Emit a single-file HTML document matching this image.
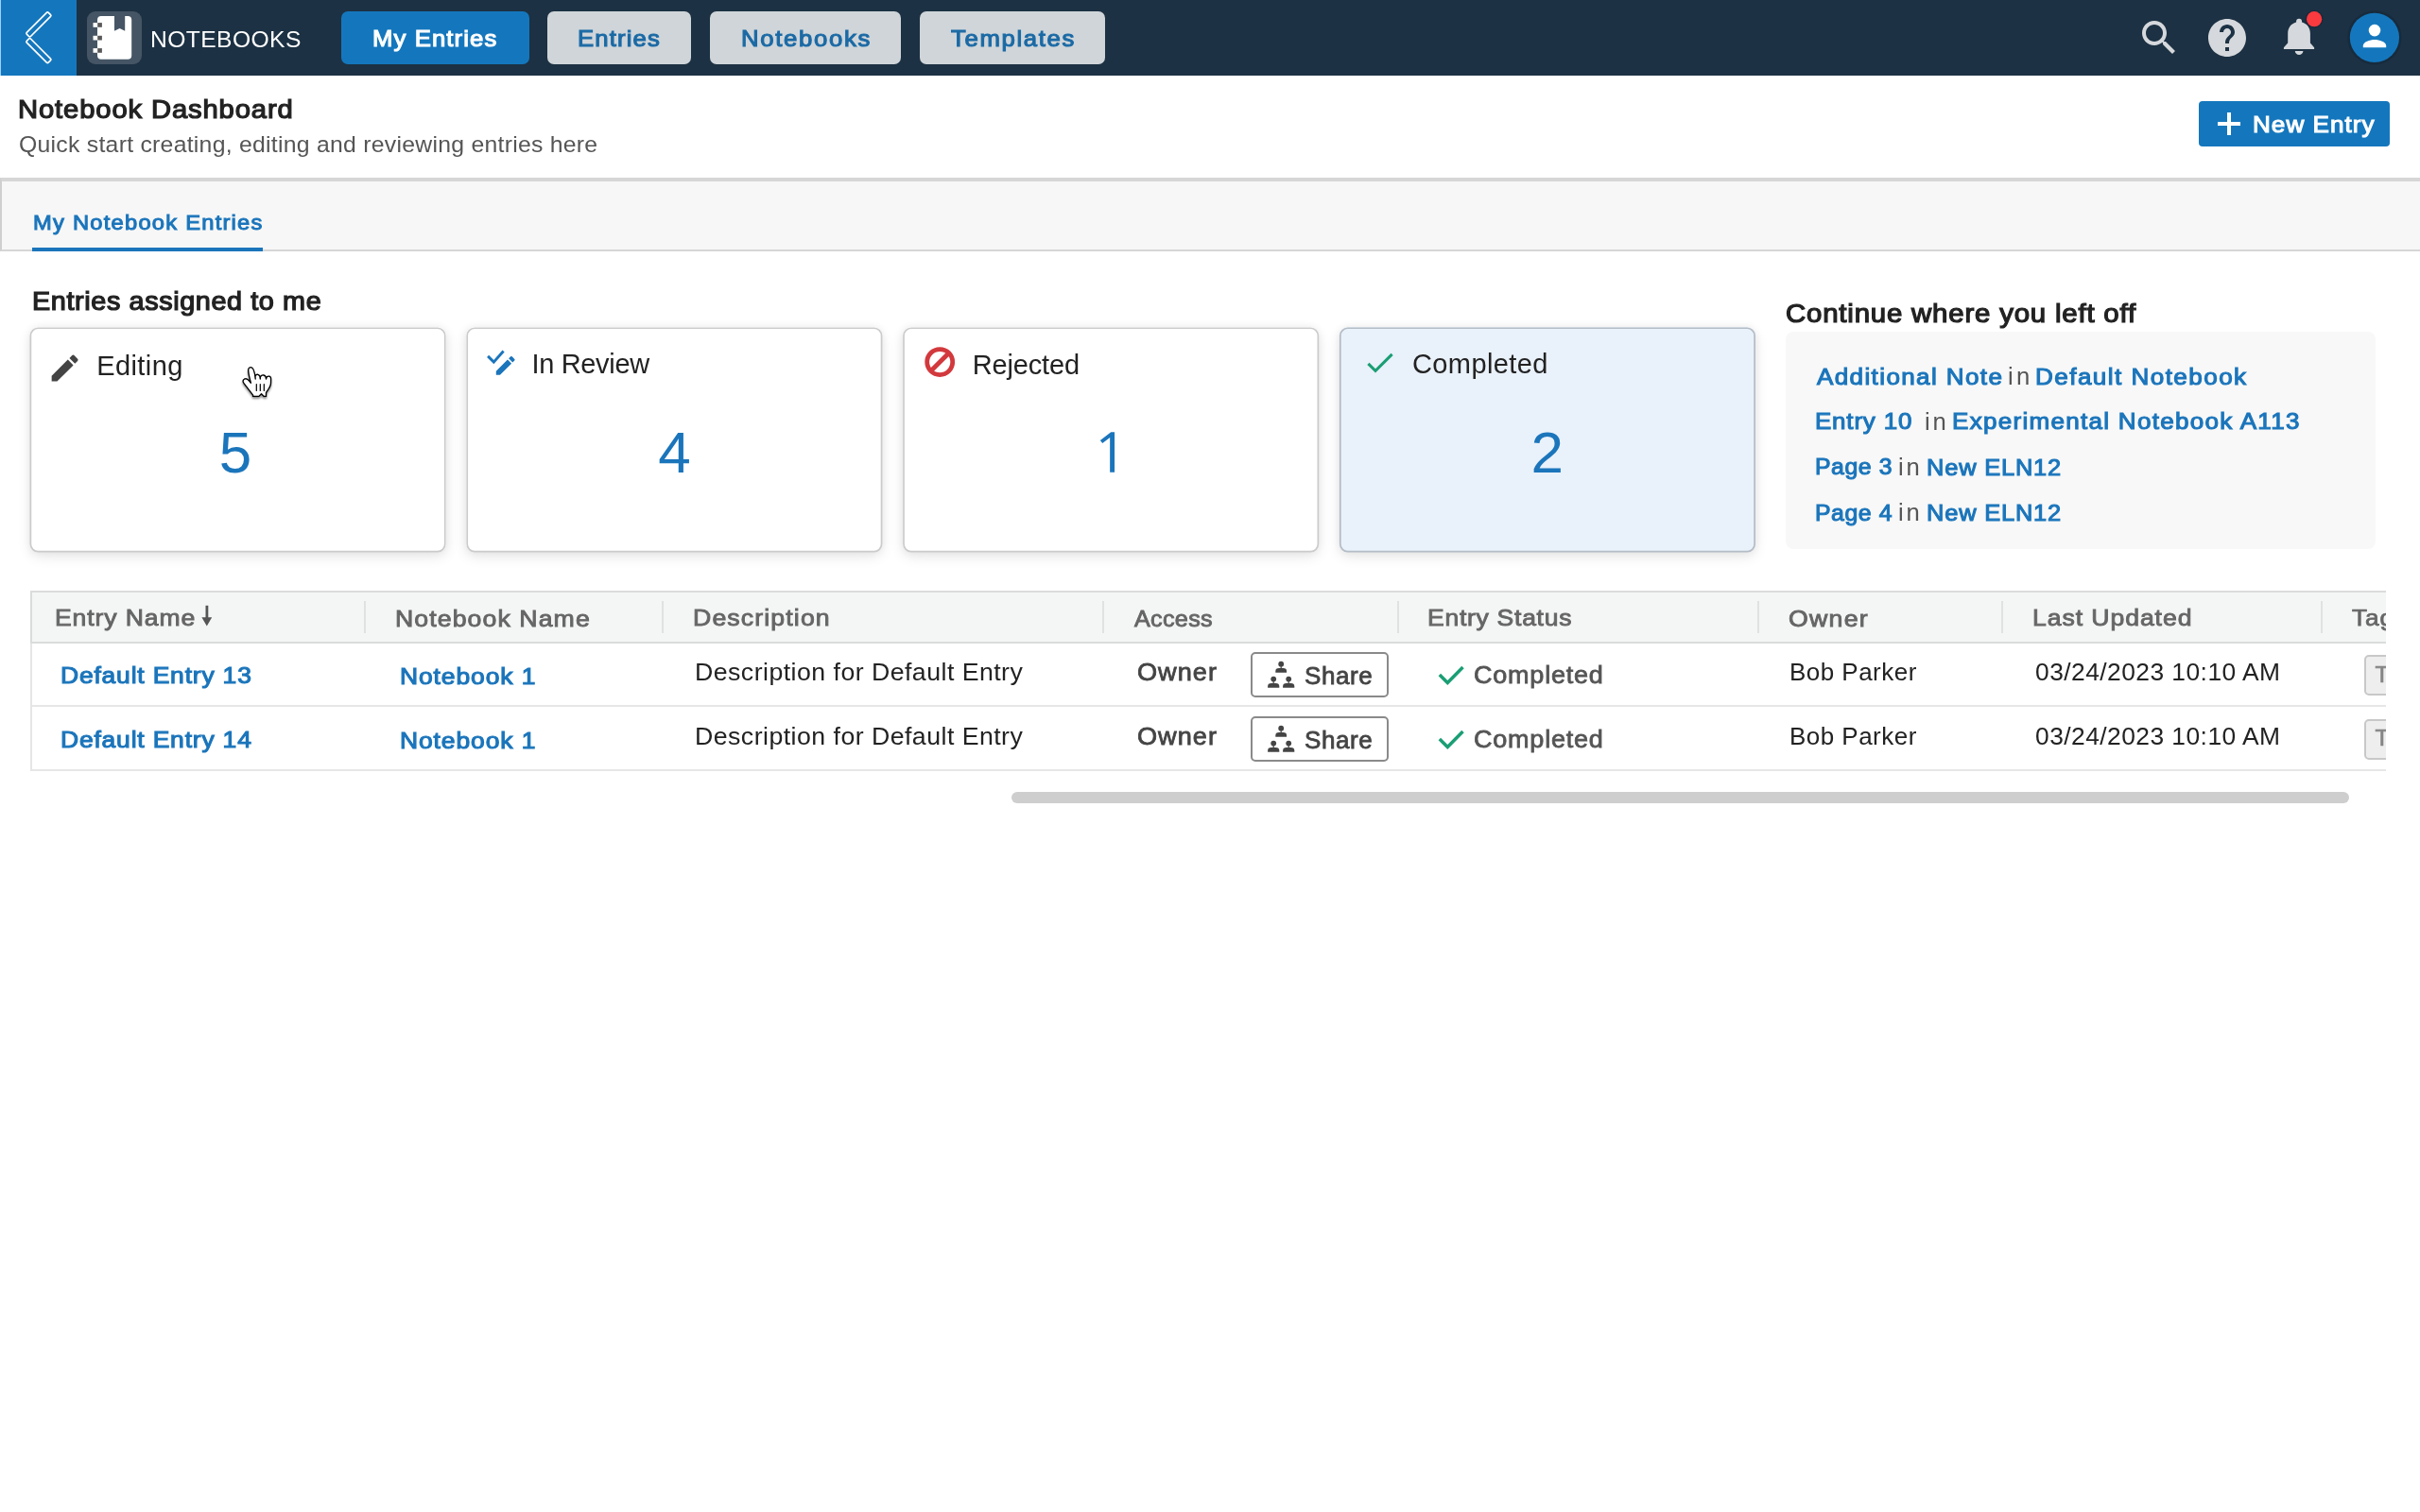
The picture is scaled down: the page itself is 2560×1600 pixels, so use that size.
<!DOCTYPE html>
<html><head><meta charset="utf-8"><title>Notebook Dashboard</title>
<style>
html,body{margin:0;padding:0;}
body{width:2560px;height:1600px;position:relative;overflow:hidden;background:#fff;font-family:"Liberation Sans",sans-serif;}
.a{position:absolute;box-sizing:border-box;}
.t{position:absolute;white-space:pre;font-weight:400;transform-origin:0 0;}
#txt{position:absolute;left:0;top:0;width:2560px;height:1600px;will-change:transform;}
svg{position:absolute;overflow:visible;}
.card{position:absolute;box-sizing:border-box;width:440px;height:238px;top:346px;border-radius:9px;background:#fff;box-shadow:0 5px 14px rgba(0,0,0,.10),0 0 8px rgba(0,0,0,.05);}
.num{position:absolute;top:0;left:0;width:100%;text-align:center;font-size:62px;line-height:62px;color:#1b75bb;}
.navb{position:absolute;box-sizing:border-box;top:12px;height:56px;border-radius:7px;background:#d0d5d9;}
.sep{position:absolute;width:2px;top:636px;height:34px;background:#dfe2e1;}
.share{position:absolute;box-sizing:border-box;left:1323px;width:146px;height:48px;border:2px solid #8a8a8a;border-radius:5px;background:#fff;}
.chip{position:absolute;box-sizing:border-box;left:21px;width:40px;height:43px;border:2px solid #c8c8c8;border-radius:5px;background:#eee;}

</style></head>
<body>
<!-- header -->
<div class="a" style="left:0;top:0;width:2560px;height:80px;background:#1c3143;"></div>
<div class="a" style="left:0;top:0;width:81px;height:80px;background:#1477bd;"></div>
<div class="a" style="left:0;top:0;width:1px;height:80px;background:#9fd0ff;"></div>
<svg style="left:0;top:0" width="81" height="80" viewBox="0 0 81 80" fill="none" stroke="#fff" stroke-width="1.7">
 <rect x="-16.200" y="-2.900" width="32.400" height="5.800" rx="1.300" transform="translate(40.900 25.900) rotate(-45)"/>
 <rect x="-16.200" y="-2.900" width="32.400" height="5.800" rx="1.300" transform="translate(40.900 53.600) rotate(45)"/>
</svg>
<!-- notebook icon -->
<div class="a" style="left:92px;top:12px;width:58px;height:56px;border-radius:9px;background:#455565;"></div>
<svg style="left:92px;top:12px" width="58" height="56" viewBox="92 12 58 56">
 <path fill="#fff" d="M107 17 H121 V32.7 L126.6 30 L132.2 32.7 V17 H135.2 a4 4 0 0 1 4 4 V58.7 a4 4 0 0 1 -4 4 H107 a4 4 0 0 1 -4 -4 V21 a4 4 0 0 1 4 -4 Z"/>
 <g fill="#fff"><rect x="98.5" y="24.1" width="4.7" height="4.7"/><rect x="98.5" y="37.8" width="4.7" height="4.7"/><rect x="98.5" y="51.1" width="4.7" height="4.7"/></g>
 <g fill="#585858"><rect x="103.2" y="24.1" width="4.7" height="4.7"/><rect x="103.2" y="37.8" width="4.7" height="4.7"/><rect x="103.2" y="51.1" width="4.7" height="4.7"/></g>
</svg>
<!-- nav buttons -->
<div class="navb" style="left:361px;width:199px;background:#1477bd;"></div>
<div class="navb" style="left:579px;width:152px;"></div>
<div class="navb" style="left:751px;width:202px;"></div>
<div class="navb" style="left:973px;width:196px;"></div>
<!-- right icons -->
<svg style="left:2260px;top:16px" width="48" height="48" viewBox="0 0 24 24" fill="#d5d8dc"><path d="M15.5 14h-.79l-.28-.27C15.41 12.59 16 11.11 16 9.5 16 5.91 13.09 3 9.5 3S3 5.91 3 9.5 5.91 16 9.5 16c1.61 0 3.09-.59 4.23-1.57l.27.28v.79l5 4.99L20.49 19l-4.99-5zm-6 0C7.01 14 5 11.99 5 9.5S7.01 5 9.5 5 14 7.01 14 9.5 11.99 14 9.5 14z"/></svg>
<svg style="left:2332px;top:16px" width="48" height="48" viewBox="0 0 24 24" fill="#d5d8dc"><path d="M12 2C6.48 2 2 6.48 2 12s4.48 10 10 10 10-4.48 10-10S17.52 2 12 2zm1 17h-2v-2h2v2zm2.07-7.75l-.9.92C13.45 12.9 13 13.5 13 15h-2v-.5c0-1.1.45-2.1 1.17-2.830l1.24-1.26c.37-.36.59-.86.59-1.41 0-1.1-.9-2-2-2s-2 .9-2 2H8c0-2.21 1.79-4 4-4s4 1.79 4 4c0 .88-.36 1.68-.93 2.25z"/></svg>
<svg style="left:2408px;top:10px" width="48" height="54" viewBox="2408 10 48 54" fill="#d5d8dc"><path d="M2432.070 19.800 a3 3 0 0 1 3 3 v0.700 C2440.500 25 2443.900 29.500 2443.900 35.500 V45.600 L2448.100 50.200 V52.100 H2415.900 V50.200 L2420.200 45.600 V35.500 C2420.200 29.500 2423.600 25 2429.070 23.500 V22.800 a3 3 0 0 1 3 -3 Z M2427.800 53.900 H2436.400 a4.300 4.200 0 0 1 -8.600 0 Z"/></svg>
<svg style="left:2436px;top:8px" width="24" height="24" viewBox="2436 8 24 24"><circle cx="2448.100" cy="20.200" r="9.300" fill="#17293a"/><circle cx="2448.100" cy="20.200" r="8.100" fill="#f93a3f"/></svg>
<svg style="left:2480px;top:8px" width="64" height="64" viewBox="2480 8 64 64"><circle cx="2511.900" cy="39.800" r="28.600" fill="#172b3d"/><circle cx="2511.900" cy="39.800" r="26.100" fill="#1477bd"/><circle cx="2512" cy="32.100" r="6.300" fill="#fff"/><path fill="#fff" d="M2499.800 50.200 v-1.600 C2499.800 44.300 2507 42 2512 42 S2524.200 44.300 2524.200 48.600 v1.600 Z"/></svg>
<!-- New entry button -->
<div class="a" style="left:2326px;top:107px;width:202px;height:48px;border-radius:4px;background:#1477bd;"></div>
<div class="a" style="left:2346px;top:129px;width:24px;height:4.4px;background:#fff;"></div>
<div class="a" style="left:2355.8px;top:119px;width:4.4px;height:24px;background:#fff;"></div>
<!-- tab bar -->
<div class="a" style="left:0;top:188px;width:2560px;height:78px;background:#f7f7f7;border-top:4px solid #d6d6d6;border-bottom:2px solid #d6d6d6;border-left:2px solid #cfcfcf;"></div>
<div class="a" style="left:34px;top:262px;width:244px;height:4px;background:#1b75bb;"></div>
<!-- cards -->
<div class="card" style="left:31.6px;background:#fff;"></div>
<svg style="left:0;top:0" width="2560" height="620"><rect x="32.40" y="347.25" width="438.35" height="236.45" rx="8" fill="#fff" stroke="#cbcbcb" stroke-width="1.7"/></svg>
<div class="card" style="left:493.4px;background:#fff;"></div>
<svg style="left:0;top:0" width="2560" height="620"><rect x="494.20" y="347.25" width="438.35" height="236.45" rx="8" fill="#fff" stroke="#cbcbcb" stroke-width="1.7"/></svg>
<div class="card" style="left:955.2px;background:#fff;"></div>
<svg style="left:0;top:0" width="2560" height="620"><rect x="956.00" y="347.25" width="438.35" height="236.45" rx="8" fill="#fff" stroke="#cbcbcb" stroke-width="1.7"/></svg>
<svg style="left:1150px;top:450px" width="40" height="56" viewBox="1150 450 40 56"><path fill="#1b75bb" d="M1175.250 457.250 H1179.050 V499.800 H1174.150 V463.060 L1166.230 469.080 L1163.860 466.070 Z"/></svg>
<div class="card" style="left:1417.0px;background:#e9f1fa;"></div>
<svg style="left:0;top:0" width="2560" height="620"><rect x="1417.80" y="347.25" width="438.35" height="236.45" rx="8" fill="#e9f1fa" stroke="#b4bcc5" stroke-width="1.7"/></svg>
<!-- card icons -->
<svg style="left:50.200px;top:371.100px" width="37.200" height="37.200" viewBox="0 0 24 24" fill="#444"><path d="M3 17.250V21h3.750L17.810 9.940l-3.750-3.750L3 17.250zM20.710 7.040a.996.996 0 0 0 0-1.410l-2.340-2.340a.996.996 0 0 0-1.410 0l-1.830 1.830 3.750 3.750 1.830-1.830z"/></svg>
<svg style="left:500px;top:355px" width="60" height="60" viewBox="500 355 60 60">
 <path d="M516.100 376.900 L522.300 383.100 L532.600 371.500" fill="none" stroke="#1b75bb" stroke-width="2.900"/>
 <g transform="translate(521.500 373.700) scale(1.100)" fill="#1b75bb"><path d="M3 17.250V21h3.750L17.810 9.940l-3.750-3.750L3 17.250zM20.710 7.040a.996.996 0 0 0 0-1.410l-2.340-2.340a.996.996 0 0 0-1.410 0l-1.830 1.830 3.750 3.750 1.830-1.830z"/></g>
</svg>
<svg style="left:976px;top:365px" width="36" height="36" viewBox="976 365 36 36" fill="none" stroke="#d2393d" stroke-width="4.800">
 <circle cx="994.200" cy="383.100" r="13.500"/><path d="M984.800 392.500 L1003.600 373.700"/>
</svg>
<svg style="left:1441.200px;top:365.300px" width="37.400" height="37.400" viewBox="0 0 24 24" fill="#1a9e74"><path d="M9 16.170L4.830 12l-1.420 1.410L9 19 21 7l-1.410-1.410z"/></svg>
<!-- continue panel -->
<div class="a" style="left:1889px;top:351px;width:624px;height:230px;border-radius:8px;background:#f8f8f8;"></div>
<!-- table -->
<div class="a" style="left:32px;top:625px;width:2492px;height:56px;background:#f4f6f5;border:2px solid #d9dcdb;border-right:none;"></div>
<div class="a" style="left:32px;top:681px;width:2492px;height:135px;border-left:2px solid #e6e6e6;border-bottom:2px solid #e6e6e6;"></div>
<div class="a" style="left:34px;top:746px;width:2490px;height:2px;background:#e6e6e6;"></div>
<div class="sep" style="left:385px"></div><div class="sep" style="left:700px"></div><div class="sep" style="left:1166px"></div><div class="sep" style="left:1478px"></div><div class="sep" style="left:1859px"></div><div class="sep" style="left:2117px"></div><div class="sep" style="left:2455px"></div>
<svg style="left:210px;top:636px" width="20" height="30" viewBox="210 636 20 30" fill="#555"><rect x="217.500" y="640.800" width="2.800" height="14"/><path d="M213.400 653.200 H224.200 L218.800 662.400 Z"/></svg>
<div class="share" style="top:690px"></div>
<div class="share" style="top:758px"></div>
<!-- scrollbar -->
<div class="a" style="left:1070px;top:838px;width:1415px;height:12px;border-radius:6px;background:#cecece;"></div>
<svg style="left:240px;top:375px" width="70" height="60" viewBox="0 0 70 60">
 <defs><filter id="cs" x="-30%" y="-30%" width="160%" height="170%"><feGaussianBlur in="SourceAlpha" stdDeviation="1"/><feOffset dy="1.5"/><feComponentTransfer><feFuncA type="linear" slope="0.450"/></feComponentTransfer><feMerge><feMergeNode/><feMergeNode in="SourceGraphic"/></feMerge></filter></defs>
 <g filter="url(#cs)">
 <path fill="#fff" stroke="#000" stroke-width="1.350" stroke-linejoin="round" d="M25.2 13.6 C23.3 13.6 22.5 15.4 22.7 17.6 C23 21.5 24.3 26.3 25.4 30.2 L23.6 28 C22.3 26.4 20.2 25.2 18.4 26.2 C16.7 27.3 16.7 29 17.8 30.4 L27.6 43.2 V44.4 H33.9 L36.5 41.7 L39.2 44.4 H41.5 V40.6 C44 36.8 46.4 34 46.5 30.5 L46.6 25.8 C46.6 22.6 42.6 22.2 41.8 25 L41.5 26 C41.6 21.4 36.2 20.6 35.4 24.2 L35.3 26 C35.4 20.6 30.6 20 30 23.4 L30.200 26 C29.800 21.5 28.800 13.700 25.200 13.600 Z"/>
 <path stroke="#000" stroke-width="1.2" stroke-linecap="round" d="M31.3 31.500 V38.400 M35.300 31.500 V38.400 M39.300 31.500 V38.400"/>
 </g>
</svg><svg style="left:1515px;top:696px" width="40" height="34" viewBox="1515 696 40 34" fill="none" stroke="#1a9e74" stroke-width="3.500"><path d="M1522.850 714.050 L1531.300 722.500 L1547.500 706"/></svg><svg style="left:1515px;top:764px" width="40" height="34" viewBox="1515 696 40 34" fill="none" stroke="#1a9e74" stroke-width="3.500"><path d="M1522.850 714.050 L1531.300 722.500 L1547.500 706"/></svg><svg style="left:1338px;top:696px" width="34" height="34" viewBox="1338 696 34 34" fill="#444">
 <circle cx="1355.200" cy="702.700" r="2.900"/><rect x="1354.600" y="705" width="1.200" height="3"/><path d="M1349.300 711.800 v-1.400 a3.800 3.300 0 0 1 3.800 -3.300 h4.200 a3.800 3.300 0 0 1 3.800 3.300 v1.400 Z"/>
 <circle cx="1347.200" cy="718.600" r="2.900"/><rect x="1346.600" y="721" width="1.200" height="3"/><path d="M1341.100 727.800 v-1.400 a3.800 3.300 0 0 1 3.800 -3.300 h4.600 a3.800 3.300 0 0 1 3.800 3.300 v1.400 Z"/>
 <circle cx="1363.200" cy="718.600" r="2.900"/><rect x="1362.600" y="721" width="1.200" height="3"/><path d="M1357.100 727.800 v-1.400 a3.800 3.300 0 0 1 3.800 -3.300 h4.600 a3.800 3.300 0 0 1 3.800 3.300 v1.400 Z"/>
</svg><svg style="left:1338px;top:764px" width="34" height="34" viewBox="1338 696 34 34" fill="#444">
 <circle cx="1355.200" cy="702.700" r="2.900"/><rect x="1354.600" y="705" width="1.200" height="3"/><path d="M1349.300 711.800 v-1.400 a3.800 3.300 0 0 1 3.800 -3.300 h4.200 a3.800 3.300 0 0 1 3.800 3.300 v1.400 Z"/>
 <circle cx="1347.200" cy="718.600" r="2.900"/><rect x="1346.600" y="721" width="1.200" height="3"/><path d="M1341.100 727.800 v-1.400 a3.800 3.300 0 0 1 3.800 -3.300 h4.600 a3.800 3.300 0 0 1 3.800 3.300 v1.400 Z"/>
 <circle cx="1363.200" cy="718.600" r="2.900"/><rect x="1362.600" y="721" width="1.200" height="3"/><path d="M1357.100 727.800 v-1.400 a3.800 3.300 0 0 1 3.800 -3.300 h4.600 a3.800 3.300 0 0 1 3.800 3.300 v1.400 Z"/>
</svg>
<div id="txt">
<div class="num" style="left:29.8px;width:438.35px;top:447.5px;">5</div>
<div class="num" style="left:494.4px;width:438.35px;top:447.5px;">4</div>
<div class="num" style="left:1417.6px;width:438.35px;top:447.5px;">2</div>
<span class="t" style="left:159.10px;top:29.90px;font-size:24.45px;line-height:24.45px;letter-spacing:0.407px;color:#fff;transform:scaleX(1.008);">NOTEBOOKS</span>
<span class="t" style="left:394.16px;top:29.21px;font-size:23.81px;line-height:23.81px;letter-spacing:1.020px;color:#fff;-webkit-text-stroke:1.07px #fff;transform:scaleX(1.08);">My Entries</span>
<span class="t" style="left:611.30px;top:29.21px;font-size:23.81px;line-height:23.81px;letter-spacing:1.066px;color:#1b6aa5;-webkit-text-stroke:1.07px #1b6aa5;transform:scaleX(1.08);">Entries</span>
<span class="t" style="left:784.34px;top:29.21px;font-size:23.81px;line-height:23.81px;letter-spacing:1.554px;color:#1b6aa5;-webkit-text-stroke:1.07px #1b6aa5;transform:scaleX(1.08);">Notebooks</span>
<span class="t" style="left:1005.64px;top:29.21px;font-size:23.81px;line-height:23.81px;letter-spacing:1.516px;color:#1b6aa5;-webkit-text-stroke:1.07px #1b6aa5;transform:scaleX(1.08);">Templates</span>
<span class="t" style="left:19.39px;top:101.85px;font-size:27.22px;line-height:27.22px;letter-spacing:0.822px;color:#222;-webkit-text-stroke:1.22px #222;transform:scaleX(1.072);">Notebook Dashboard</span>
<span class="t" style="left:19.60px;top:140.65px;font-size:24.04px;line-height:24.04px;letter-spacing:0.255px;color:#555;transform:scaleX(1.031);">Quick start creating, editing and reviewing entries here</span>
<span class="t" style="left:2383.33px;top:119.85px;font-size:24.11px;line-height:24.11px;letter-spacing:0.976px;color:#fff;-webkit-text-stroke:1.08px #fff;transform:scaleX(1.08);">New Entry</span>
<span class="t" style="left:35.40px;top:224.71px;font-size:21.97px;line-height:21.97px;letter-spacing:1.141px;color:#1b75bb;-webkit-text-stroke:0.99px #1b75bb;transform:scaleX(1.08);">My Notebook Entries</span>
<span class="t" style="left:34.26px;top:304.95px;font-size:27.22px;line-height:27.22px;letter-spacing:0.576px;color:#222;-webkit-text-stroke:1.22px #222;transform:scaleX(1.058);">Entries assigned to me</span>
<span class="t" style="left:102.28px;top:372.74px;font-size:29.01px;line-height:29.01px;letter-spacing:0.392px;color:#222;">Editing</span>
<span class="t" style="left:562.40px;top:370.69px;font-size:29.01px;line-height:29.01px;letter-spacing:-0.316px;color:#222;">In Review</span>
<span class="t" style="left:1028.77px;top:371.64px;font-size:29.01px;line-height:29.01px;letter-spacing:-0.159px;color:#222;">Rejected</span>
<span class="t" style="left:1493.55px;top:370.94px;font-size:29.01px;line-height:29.01px;letter-spacing:0.375px;color:#222;transform:scaleX(1.001);">Completed</span>
<span class="t" style="left:1889.05px;top:318.35px;font-size:27.22px;line-height:27.22px;letter-spacing:0.745px;color:#222;-webkit-text-stroke:1.22px #222;transform:scaleX(1.08);">Continue where you left off</span>
<span class="t" style="left:1922.09px;top:386.95px;font-size:24.11px;line-height:24.11px;letter-spacing:1.275px;color:#1b75bb;-webkit-text-stroke:1.08px #1b75bb;transform:scaleX(1.08);">Additional Note</span>
<span class="t" style="left:2124.24px;top:386.00px;font-size:25.28px;line-height:25.28px;letter-spacing:3.332px;color:#555;transform:scaleX(1.019);">in</span>
<span class="t" style="left:2153.10px;top:386.95px;font-size:24.11px;line-height:24.11px;letter-spacing:1.354px;color:#1b75bb;-webkit-text-stroke:1.08px #1b75bb;transform:scaleX(1.08);">Default Notebook</span>
<span class="t" style="left:1920.28px;top:434.45px;font-size:24.11px;line-height:24.11px;letter-spacing:0.772px;color:#1b75bb;-webkit-text-stroke:1.08px #1b75bb;transform:scaleX(1.075);">Entry 10</span>
<span class="t" style="left:2036.08px;top:434.00px;font-size:25.28px;line-height:25.28px;letter-spacing:2.696px;color:#555;transform:scaleX(1.016);">in</span>
<span class="t" style="left:2065.09px;top:434.45px;font-size:24.11px;line-height:24.11px;letter-spacing:1.187px;color:#1b75bb;-webkit-text-stroke:1.08px #1b75bb;transform:scaleX(1.08);">Experimental Notebook A113</span>
<span class="t" style="left:1920.32px;top:482.45px;font-size:24.11px;line-height:24.11px;letter-spacing:0.545px;color:#1b75bb;-webkit-text-stroke:1.08px #1b75bb;transform:scaleX(1.029);">Page 3</span>
<span class="t" style="left:2007.91px;top:482.00px;font-size:25.28px;line-height:25.28px;letter-spacing:2.696px;color:#555;transform:scaleX(1.016);">in</span>
<span class="t" style="left:2037.79px;top:482.95px;font-size:24.11px;line-height:24.11px;letter-spacing:0.781px;color:#1b75bb;-webkit-text-stroke:1.08px #1b75bb;transform:scaleX(1.054);">New ELN12</span>
<span class="t" style="left:1920.32px;top:530.55px;font-size:24.11px;line-height:24.11px;letter-spacing:0.545px;color:#1b75bb;-webkit-text-stroke:1.08px #1b75bb;transform:scaleX(1.029);">Page 4</span>
<span class="t" style="left:2007.91px;top:530.10px;font-size:25.28px;line-height:25.28px;letter-spacing:2.696px;color:#555;transform:scaleX(1.016);">in</span>
<span class="t" style="left:2037.79px;top:530.55px;font-size:24.11px;line-height:24.11px;letter-spacing:0.781px;color:#1b75bb;-webkit-text-stroke:1.08px #1b75bb;transform:scaleX(1.054);">New ELN12</span>
<span class="t" style="left:58.04px;top:641.94px;font-size:24.7px;line-height:24.7px;letter-spacing:0.837px;color:#666;-webkit-text-stroke:0.91px #666;transform:scaleX(1.075);">Entry Name</span>
<span class="t" style="left:418.40px;top:642.94px;font-size:24.7px;line-height:24.7px;letter-spacing:1.009px;color:#666;-webkit-text-stroke:0.91px #666;transform:scaleX(1.08);">Notebook Name</span>
<span class="t" style="left:733.23px;top:641.94px;font-size:24.7px;line-height:24.7px;letter-spacing:1.047px;color:#666;-webkit-text-stroke:0.91px #666;transform:scaleX(1.08);">Description</span>
<span class="t" style="left:1199.78px;top:642.94px;font-size:24.7px;line-height:24.7px;letter-spacing:0.310px;color:#666;-webkit-text-stroke:0.91px #666;transform:scaleX(1.018);">Access</span>
<span class="t" style="left:1509.73px;top:641.94px;font-size:24.7px;line-height:24.7px;letter-spacing:0.689px;color:#666;-webkit-text-stroke:0.91px #666;transform:scaleX(1.073);">Entry Status</span>
<span class="t" style="left:1892.42px;top:642.94px;font-size:24.7px;line-height:24.7px;letter-spacing:1.199px;color:#666;-webkit-text-stroke:0.91px #666;transform:scaleX(1.08);">Owner</span>
<span class="t" style="left:2150.40px;top:641.94px;font-size:24.7px;line-height:24.7px;letter-spacing:0.856px;color:#666;-webkit-text-stroke:0.91px #666;transform:scaleX(1.078);">Last Updated</span>
<span class="t" style="left:63.91px;top:703.22px;font-size:24.49px;line-height:24.49px;letter-spacing:0.755px;color:#1b75bb;-webkit-text-stroke:1.1px #1b75bb;transform:scaleX(1.08);">Default Entry 13</span>
<span class="t" style="left:423.33px;top:703.72px;font-size:24.49px;line-height:24.49px;letter-spacing:0.833px;color:#1b75bb;-webkit-text-stroke:1.1px #1b75bb;transform:scaleX(1.08);">Notebook 1</span>
<span class="t" style="left:735.03px;top:698.62px;font-size:25.49px;line-height:25.49px;letter-spacing:0.437px;color:#222;transform:scaleX(1.048);">Description for Default Entry</span>
<span class="t" style="left:1203.10px;top:698.53px;font-size:25.74px;line-height:25.74px;letter-spacing:0.950px;color:#444;-webkit-text-stroke:0.77px #444;transform:scaleX(1.055);">Owner</span>
<span class="t" style="left:1380.10px;top:702.83px;font-size:25.74px;line-height:25.74px;letter-spacing:0.577px;color:#444;-webkit-text-stroke:0.77px #444;transform:scaleX(1.012);">Share</span>
<span class="t" style="left:1559.10px;top:702.33px;font-size:25.74px;line-height:25.74px;letter-spacing:0.716px;color:#555;-webkit-text-stroke:0.77px #555;transform:scaleX(1.051);">Completed</span>
<span class="t" style="left:1893.28px;top:698.62px;font-size:25.49px;line-height:25.49px;letter-spacing:0.466px;color:#222;transform:scaleX(1.02);">Bob Parker</span>
<span class="t" style="left:2153.23px;top:698.62px;font-size:25.49px;line-height:25.49px;letter-spacing:0.441px;color:#222;transform:scaleX(1.035);">03/24/2023 10:10 AM</span>
<span class="t" style="left:63.91px;top:771.22px;font-size:24.49px;line-height:24.49px;letter-spacing:0.755px;color:#1b75bb;-webkit-text-stroke:1.1px #1b75bb;transform:scaleX(1.08);">Default Entry 14</span>
<span class="t" style="left:423.33px;top:771.72px;font-size:24.49px;line-height:24.49px;letter-spacing:0.833px;color:#1b75bb;-webkit-text-stroke:1.1px #1b75bb;transform:scaleX(1.08);">Notebook 1</span>
<span class="t" style="left:735.03px;top:766.62px;font-size:25.49px;line-height:25.49px;letter-spacing:0.437px;color:#222;transform:scaleX(1.048);">Description for Default Entry</span>
<span class="t" style="left:1203.10px;top:766.53px;font-size:25.74px;line-height:25.74px;letter-spacing:0.950px;color:#444;-webkit-text-stroke:0.77px #444;transform:scaleX(1.055);">Owner</span>
<span class="t" style="left:1380.10px;top:770.83px;font-size:25.74px;line-height:25.74px;letter-spacing:0.577px;color:#444;-webkit-text-stroke:0.77px #444;transform:scaleX(1.012);">Share</span>
<span class="t" style="left:1559.10px;top:770.33px;font-size:25.74px;line-height:25.74px;letter-spacing:0.716px;color:#555;-webkit-text-stroke:0.77px #555;transform:scaleX(1.051);">Completed</span>
<span class="t" style="left:1893.28px;top:766.62px;font-size:25.49px;line-height:25.49px;letter-spacing:0.466px;color:#222;transform:scaleX(1.02);">Bob Parker</span>
<span class="t" style="left:2153.23px;top:766.62px;font-size:25.49px;line-height:25.49px;letter-spacing:0.441px;color:#222;transform:scaleX(1.035);">03/24/2023 10:10 AM</span>
<div class="a" style="left:2480px;top:627px;width:44px;height:190px;overflow:hidden;">
<div class="chip" style="top:65.500px"></div>
<div class="chip" style="top:133.500px"></div>
<span class="t" style="left:7.600px;top:14.500px;font-size:24.500px;line-height:24.500px;letter-spacing:0.900px;color:#666;-webkit-text-stroke:0.750px #666;transform:scaleX(1.070);">Tags</span>
<span class="t" style="left:32.600px;top:74.700px;font-size:24px;line-height:24px;color:#858585;-webkit-text-stroke:0.700px #858585;">Tag</span>
<span class="t" style="left:32.600px;top:142.400px;font-size:24px;line-height:24px;color:#858585;-webkit-text-stroke:0.700px #858585;">Tag</span>
</div>
</div>
</body></html>
